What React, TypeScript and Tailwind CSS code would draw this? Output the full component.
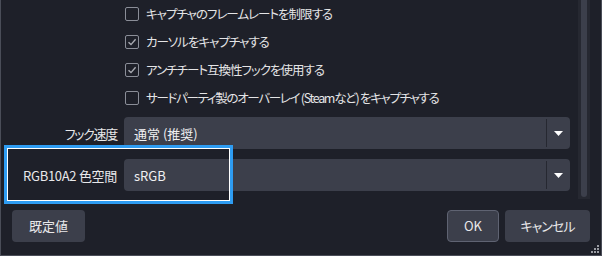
import React from "react";

const font = "font-['Noto_Sans_CJK_JP','Noto_Sans',sans-serif] [font-feature-settings:'palt']";

function Check({ checked, label, tight }: { checked?: boolean; label: string; tight?: boolean }) {
  return (
    <div className="flex h-[28px] items-center gap-[7px] pl-[124px]">
      <div className="flex h-[14px] w-[14px] items-center justify-center rounded-[2px] border border-[#8b8e98] bg-[#1e2029]">
        {checked && (
          <svg width="10" height="10" viewBox="0 0 10 10">
            <path d="M1.5 5.2 L4 7.6 L8.6 2.2" fill="none" stroke="#a9abb2" strokeWidth="1.4" />
          </svg>
        )}
      </div>
      <span className={`text-[12.5px] leading-none text-[#e4e4e6] ${tight ? "tracking-[-1.3px]" : "tracking-[-1px]"}`}>{label}</span>
    </div>
  );
}

function Select({ label, value, labelClass }: { label: string; value: string; labelClass: string }) {
  return (
    <div className="flex h-[32px] items-center">
      <div className={`w-[116px] text-right text-[13px] leading-none text-[#e8e8ea] ${labelClass}`}>{label}</div>
      <div className="ml-[7px] flex h-[32px] w-[446px] items-stretch rounded-[4px] bg-[#3c3f4b]">
        <div className="flex flex-1 items-center pl-[10px] text-[13px] leading-none text-[#f0f0f2]">{value}</div>
        <div className="my-[2px] w-px bg-[#262831]" />
        <div className="flex w-[23px] items-center justify-center">
          <svg width="9" height="5" viewBox="0 0 9 5">
            <path d="M0 0 H9 L4.5 5 Z" fill="#ffffff" />
          </svg>
        </div>
      </div>
    </div>
  );
}

export default function App() {
  return (
    <div className={`relative flex h-[256px] w-[602px] flex-col border-x border-b border-[#4a4d58] bg-[#1e2029] ${font}`}>
      <div className="flex h-[199px]">
        <div className="flex w-[577px] flex-col">
          <Check label="キャプチャのフレームレートを制限する" />
          <Check checked label="カーソルをキャプチャする" />
          <Check checked label="アンチチート互換性フックを使用する" />
          <Check tight label="サードパーティ製のオーバーレイ (Steamなど) をキャプチャする" />
          <div className="mt-[5px] flex flex-col gap-[10px]">
            <Select label="フック速度" value="通常 (推奨)" labelClass="tracking-[-1.3px]" />
            <Select label="RGB10A2 色空間" value="sRGB" labelClass="tracking-[-0.3px]" />
          </div>
        </div>
        <div className="flex w-[12px] justify-center bg-[#262831]">
          <div className="h-[197px] w-[6px] rounded-b-[3px] bg-[#3c3f4b]" />
        </div>
      </div>
      <div className="mt-[11px] flex h-[32px] items-center justify-between px-[11px]">
        <button className="h-[32px] w-[73px] rounded-[4px] bg-[#3c3f4b] text-[13px] text-[#e8e8ea]">既定値</button>
        <div className="flex gap-[6px]">
          <button className="h-[32px] w-[52px] rounded-[4px] border border-[#5f6372] bg-[#3c3f4b] text-[13px] text-[#e8e8ea]">OK</button>
          <button className="h-[32px] w-[85px] rounded-[4px] bg-[#3c3f4b] text-[13px] tracking-[-1px] text-[#e8e8ea]">キャンセル</button>
        </div>
      </div>
      <div className="pointer-events-none absolute left-[3px] top-[145px] h-[59px] w-[229px] border-[3px] border-[#2e9cf2]">
        <div className="h-full w-full border border-white" />
      </div>
      <svg className="absolute bottom-[1px] right-[1px]" width="9" height="9" viewBox="0 0 9 9">
        <rect x="6" y="0" width="2" height="2" fill="#9a9ca3" />
        <rect x="3" y="3" width="2" height="2" fill="#9a9ca3" />
        <rect x="6" y="3" width="2" height="2" fill="#9a9ca3" />
        <rect x="0" y="6" width="2" height="2" fill="#9a9ca3" />
        <rect x="3" y="6" width="2" height="2" fill="#9a9ca3" />
        <rect x="6" y="6" width="2" height="2" fill="#9a9ca3" />
      </svg>
    </div>
  );
}
